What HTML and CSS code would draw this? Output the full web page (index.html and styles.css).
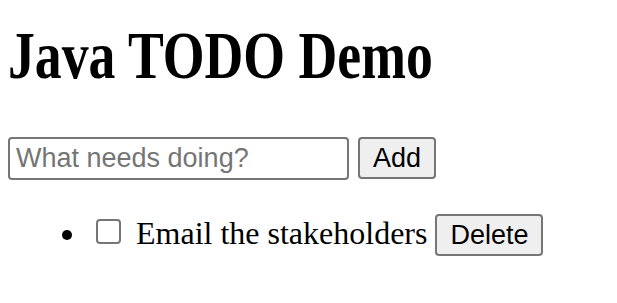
FILE: index.html
```html
<!DOCTYPE html>
<html lang="en">
<head>
    <meta charset="UTF-8">
    <meta name="viewport" content="width=device-width, initial-scale=1.0">
    <title>Java TODO Demo</title>
    <link rel="stylesheet" href="styles.css">
</head>
<body>
    <h1>Java TODO Demo</h1>

    <form class="todo-form" onsubmit="return false">
        <input type="text" class="todo-input" placeholder="What needs doing?">
        <button type="submit" class="btn btn-add">Add</button>
    </form>

    <ul class="todo-list">
        <li class="todo-item">
            <input type="checkbox" class="todo-check">
            <span class="todo-text">Email the stakeholders</span>
            <button type="button" class="btn btn-delete">Delete</button>
        </li>
    </ul>
</body>
</html>
```

FILE: styles.css
```css
body {
    margin: 8px;
    font-family: 'Liberation Serif', 'Times New Roman', serif;
    font-size: 32px;
    color: #000000;
    background: #ffffff;
}

h1 {
    font-size: 68px;
    line-height: 78px;
    font-weight: bold;
    margin: 8px 0 43px;
    transform: scaleX(0.79);
    transform-origin: left center;
}

.todo-form {
    display: flex;
    align-items: flex-start;
    gap: 9px;
    margin: 0;
}

.todo-input {
    box-sizing: border-box;
    width: 341px;
    height: 43px;
    margin: 0;
    padding: 0 6px;
    font-family: 'Liberation Sans', Arial, sans-serif;
    font-size: 27px;
    color: #000000;
    border: 2px solid #767676;
    border-radius: 4px;
    background: #ffffff;
}

.todo-input::placeholder {
    color: #757575;
}

.btn {
    box-sizing: border-box;
    height: 42px;
    margin: 0;
    padding: 0;
    font-family: 'Liberation Sans', Arial, sans-serif;
    font-size: 27px;
    color: #000000;
    background: #efefef;
    border: 2px solid #767676;
    border-radius: 4px;
}

.btn-add {
    width: 78px;
}

.todo-list {
    margin: 34px 0;
    padding-left: 80px;
}

.todo-check {
    appearance: none;
    -webkit-appearance: none;
    display: inline-block;
    box-sizing: border-box;
    width: 25px;
    height: 25px;
    margin: 0 7px 0 8px;
    border: 2px solid #767676;
    border-radius: 4px;
    background: #ffffff;
    vertical-align: baseline;
}

.btn-delete {
    height: 42px;
    width: 108px;
}
```
